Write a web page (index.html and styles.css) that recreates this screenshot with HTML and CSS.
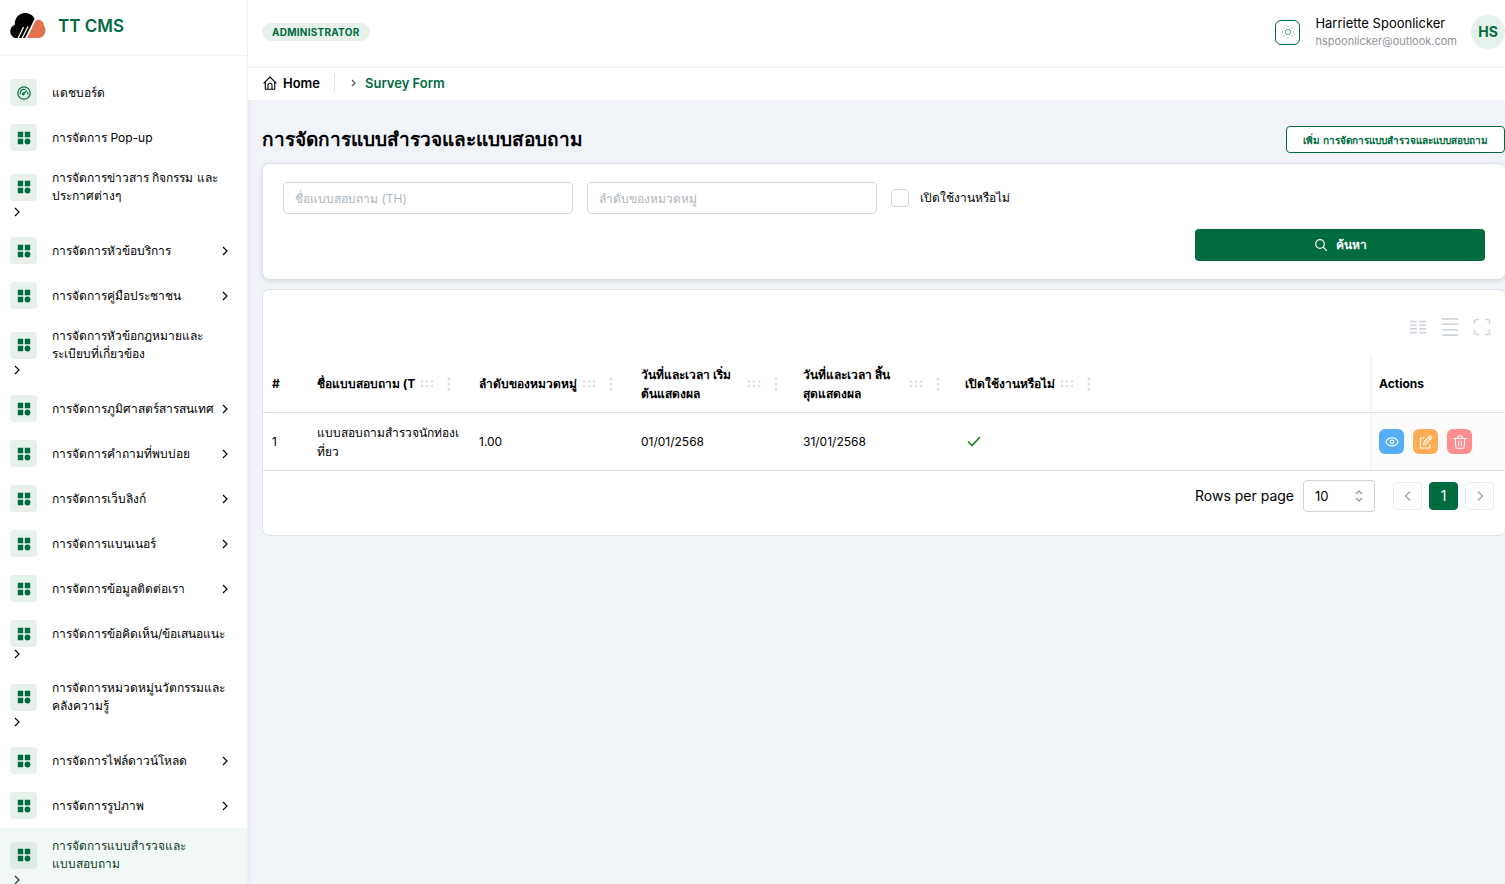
FILE: index.html
```html
<!DOCTYPE html>
<html lang="th">
<head>
<meta charset="utf-8">
<meta name="viewport" content="width=device-width, initial-scale=1">
<title>TT CMS</title>
<link rel="stylesheet" href="styles.css">
</head>
<body>
<svg class="defs" aria-hidden="true">
  <symbol id="grid" viewBox="0 0 14 14"><path fill="currentColor" d="M.8.8h5.4v5.4H.8zM7.8.8h5.4v5.4H7.8zM.8 7.8h5.4v5.4H.8z"/><circle cx="10.5" cy="10.5" r="2.9" fill="currentColor"/></symbol>
  <symbol id="chev" viewBox="0 0 14 14"><path fill="none" stroke="currentColor" stroke-width="1.2" d="M5 3l4 4-4 4"/></symbol>
  <symbol id="grip" viewBox="0 0 14 14"><g fill="currentColor"><circle cx="2" cy="4.500" r="1.300"/><circle cx="7" cy="4.500" r="1.300"/><circle cx="12" cy="4.500" r="1.300"/><circle cx="2" cy="9" r="1.300"/><circle cx="7" cy="9" r="1.300"/><circle cx="12" cy="9" r="1.300"/></g></symbol>
  <symbol id="dots" viewBox="0 0 16 16"><g fill="currentColor"><circle cx="8" cy="3" r="1.500"/><circle cx="8" cy="8" r="1.500"/><circle cx="8" cy="13" r="1.500"/></g></symbol>
</svg>
<div class="app">
  <aside class="sidebar">
    <div class="brand">
      <svg class="logo" viewBox="0 0 36 26"><path fill="#000" d="M5 25C1.800 24 0 21 .3 17.600c.2-2.900 2-5 4.500-5.900C4.500 5 9 0 15 0c4.600 0 8.300 2.400 9.800 6.300L15.500 25z"/><path fill="#e2714f" d="M17 25L25.500 7.800C27 6.800 28.500 6.500 30 7c2.400.8 4 3.200 4 6 1.400 1.400 1.800 3.300 1.400 5.500-.6 3.800-3.500 6.500-7.400 6.500z"/><path fill="none" stroke="#fff" stroke-width="1.300" d="M8 25.500l5.500-11.500M12 25.500l6-12M15.500 25.500L25.300 6"/></svg>
      <span class="brand-name">TT CMS</span>
    </div>
    <nav class="menu">
      <a class="item" href="#"><span class="tile"><svg viewBox="0 0 14 14" fill="none" stroke="currentColor" stroke-width="1.200"><circle cx="7" cy="7" r="6.200"/><path d="M3.400 8.500A3.700 3.700 0 0 1 8.400 3.700M10.600 6a4 4 0 0 1 0 2.500M6.500 8L9.800 4.500"/><circle cx="6.300" cy="8" r=".8"/></svg></span><span class="label">แดชบอร์ด</span></a>
      <a class="item" href="#"><span class="tile"><svg><use href="#grid"/></svg></span><span class="label">การจัดการ Pop-up</span></a>
      <a class="item stacked" href="#"><span class="tile"><svg><use href="#grid"/></svg></span><span class="label">การจัดการข่าวสาร กิจกรรม และ<br>ประกาศต่างๆ</span><svg class="chev"><use href="#chev"/></svg></a>
      <a class="item" href="#"><span class="tile"><svg><use href="#grid"/></svg></span><span class="label">การจัดการหัวข้อบริการ</span><svg class="chev"><use href="#chev"/></svg></a>
      <a class="item" href="#"><span class="tile"><svg><use href="#grid"/></svg></span><span class="label">การจัดการคู่มือประชาชน</span><svg class="chev"><use href="#chev"/></svg></a>
      <a class="item stacked" href="#"><span class="tile"><svg><use href="#grid"/></svg></span><span class="label">การจัดการหัวข้อกฎหมายและ<br>ระเบียบที่เกี่ยวข้อง</span><svg class="chev"><use href="#chev"/></svg></a>
      <a class="item" href="#"><span class="tile"><svg><use href="#grid"/></svg></span><span class="label">การจัดการภูมิศาสตร์สารสนเทศ</span><svg class="chev"><use href="#chev"/></svg></a>
      <a class="item" href="#"><span class="tile"><svg><use href="#grid"/></svg></span><span class="label">การจัดการคำถามที่พบบ่อย</span><svg class="chev"><use href="#chev"/></svg></a>
      <a class="item" href="#"><span class="tile"><svg><use href="#grid"/></svg></span><span class="label">การจัดการเว็บลิงก์</span><svg class="chev"><use href="#chev"/></svg></a>
      <a class="item" href="#"><span class="tile"><svg><use href="#grid"/></svg></span><span class="label">การจัดการแบนเนอร์</span><svg class="chev"><use href="#chev"/></svg></a>
      <a class="item" href="#"><span class="tile"><svg><use href="#grid"/></svg></span><span class="label">การจัดการข้อมูลติดต่อเรา</span><svg class="chev"><use href="#chev"/></svg></a>
      <a class="item stacked" href="#"><span class="tile"><svg><use href="#grid"/></svg></span><span class="label">การจัดการข้อคิดเห็น/ข้อเสนอแนะ</span><svg class="chev"><use href="#chev"/></svg></a>
      <a class="item stacked" href="#"><span class="tile"><svg><use href="#grid"/></svg></span><span class="label">การจัดการหมวดหมู่นวัตกรรมและ<br>คลังความรู้</span><svg class="chev"><use href="#chev"/></svg></a>
      <a class="item" href="#"><span class="tile"><svg><use href="#grid"/></svg></span><span class="label">การจัดการไฟล์ดาวน์โหลด</span><svg class="chev"><use href="#chev"/></svg></a>
      <a class="item" href="#"><span class="tile"><svg><use href="#grid"/></svg></span><span class="label">การจัดการรูปภาพ</span><svg class="chev"><use href="#chev"/></svg></a>
      <a class="item stacked active" href="#"><span class="tile"><svg><use href="#grid"/></svg></span><span class="label">การจัดการแบบสำรวจและ<br>แบบสอบถาม</span><svg class="chev"><use href="#chev"/></svg></a>
    </nav>
  </aside>

  <div class="main">
    <header class="topbar">
      <span class="role">ADMINISTRATOR</span>
      <div class="account">
        <button class="theme" type="button" aria-label="Theme"><svg viewBox="0 0 14 14" fill="none" stroke="currentColor"><circle cx="7" cy="7" r="2.600"/><path stroke-linecap="round" d="M7 1.400v.3M7 12.300v.3M1.400 7h.3M12.300 7h.3M3 3l.2.2M10.800 10.800l.2.2M3 11l.2-.2M10.800 3.200l.2-.2"/></svg></button>
        <div class="who"><span class="who-name">Harriette Spoonlicker</span><span class="who-mail">hspoonlicker@outlook.com</span></div>
        <span class="avatar">HS</span>
      </div>
    </header>
    <nav class="crumbs" aria-label="Breadcrumb">
      <a class="home" href="#"><svg viewBox="0 0 14 14" fill="none" stroke="currentColor" stroke-width="1.100" stroke-linejoin="round"><path d="M.6 7.300L7 1l6.400 6.300M2.300 6v7.300h9.400V6M5 13.300V9.200a2 2 0 0 1 4 0v4.100"/></svg>Home</a>
      <a class="here" href="#"><svg viewBox="0 0 14 14" fill="none" stroke="#555" stroke-width="1.200"><path d="M5 4l3 3-3 3"/></svg>Survey Form</a>
    </nav>

    <main class="content">
      <div class="heading">
        <h1>การจัดการแบบสำรวจและแบบสอบถาม</h1>
        <button class="add" type="button">เพิ่ม การจัดการแบบสำรวจและแบบสอบถาม</button>
      </div>
      <form class="card filters">
        <input class="field" type="text" aria-label="ชื่อแบบสอบถาม (TH)" placeholder="ชื่อแบบสอบถาม (TH)">
        <input class="field" type="text" aria-label="ลำดับของหมวดหมู่" placeholder="ลำดับของหมวดหมู่">
        <label class="check"><input type="checkbox">เปิดใช้งานหรือไม่</label>
        <button class="search" type="button"><svg viewBox="0 0 14 14" fill="none" stroke="currentColor" stroke-width="1.200"><circle cx="6" cy="6" r="4.300"/><path d="M9.200 9.200l3.600 3.600"/></svg>ค้นหา</button>
      </form>
      <section class="card listing">
        <div class="tools">
          <button type="button" aria-label="Columns"><svg viewBox="0 0 18 18" stroke="currentColor" stroke-width="1.600" stroke-linecap="round"><path d="M1.500 3.500h5.700M1.500 7.200h5.700M1.500 10.900h5.700M1.500 14.600h5.700M10.800 3.500h5.700M10.800 7.200h5.700M10.800 10.900h5.700M10.800 14.600h5.700"/></svg></button>
          <button type="button" aria-label="Density"><svg viewBox="0 0 18 18" stroke="currentColor" stroke-width="1.600" stroke-linecap="round"><path d="M1.500.9h15M1.500 6.300h15M1.500 11.700h15M1.500 17.100h15"/></svg></button>
          <button type="button" aria-label="Full screen"><svg viewBox="0 0 18 18" fill="none" stroke="currentColor" stroke-width="1.600" stroke-linecap="round"><path d="M1.500 5.500v-2a2 2 0 0 1 2-2h2M12.500 1.500h2a2 2 0 0 1 2 2v2M16.500 12.500v2a2 2 0 0 1-2 2h-2M5.500 16.500h-2a2 2 0 0 1-2-2v-2"/></svg></button>
        </div>
        <table>
          <colgroup><col class="c-num"><col class="c-mid"><col class="c-mid"><col class="c-mid"><col class="c-mid"><col><col class="c-act"></colgroup>
          <thead><tr>
            <th>#</th>
            <th><div class="th"><span class="one">ชื่อแบบสอบถาม (T</span><svg class="grip"><use href="#grip"/></svg><svg class="dots"><use href="#dots"/></svg></div></th>
            <th><div class="th"><span class="one">ลำดับของหมวดหมู่</span><svg class="grip"><use href="#grip"/></svg><svg class="dots"><use href="#dots"/></svg></div></th>
            <th><div class="th"><span class="two">วันที่และเวลา เริ่ม<br>ต้นแสดงผล</span><svg class="grip"><use href="#grip"/></svg><svg class="dots"><use href="#dots"/></svg></div></th>
            <th><div class="th"><span class="two">วันที่และเวลา สิ้น<br>สุดแสดงผล</span><svg class="grip"><use href="#grip"/></svg><svg class="dots"><use href="#dots"/></svg></div></th>
            <th><div class="th"><span class="one">เปิดใช้งานหรือไม่</span><svg class="grip"><use href="#grip"/></svg><svg class="dots"><use href="#dots"/></svg></div></th>
            <th class="pin">Actions</th>
          </tr></thead>
          <tbody><tr>
            <td>1</td>
            <td>แบบสอบถามสำรวจนักท่องเ<br>ที่ยว</td>
            <td>1.00</td>
            <td>01/01/2568</td>
            <td>31/01/2568</td>
            <td><svg class="tick" viewBox="0 0 18 18" fill="none" stroke="#128a12" stroke-width="1.600"><path d="M3 8.500l4 4L15 4"/></svg></td>
            <td class="pin"><div class="acts">
              <button class="view" type="button" aria-label="View"><svg viewBox="0 0 14 14" fill="none" stroke="currentColor" stroke-width="1.100"><path d="M.8 6.800C2 4.300 4.300 2.700 7 2.700s5 1.600 6.200 4.100C12 9.300 9.700 10.900 7 10.900S2 9.300.8 6.800z"/><circle cx="7" cy="6.800" r="1.700"/></svg></button>
              <button class="edit" type="button" aria-label="Edit"><svg viewBox="0 0 14 14" fill="none" stroke="currentColor" stroke-width="1.100" stroke-linejoin="round" stroke-linecap="round"><path d="M5 3H1.500v10h9.300V9.500M4.500 9.700l.7-2.900L11 1.200c.7-.6 2.200.7 1.500 1.600L7 8.700zM9.700 2.500l1.800 1.600"/></svg></button>
              <button class="del" type="button" aria-label="Delete"><svg viewBox="0 0 14 14" fill="none" stroke="currentColor" stroke-width="1.100" stroke-linejoin="round" stroke-linecap="round"><path d="M1 3.500h12M4.500 3.300C4.500 1.500 5.300.8 7 .8s2.500.7 2.500 2.500M2.200 3.800l.6 8c.1 1 .5 1.500 1.500 1.500h5.400c1 0 1.400-.5 1.500-1.500l.6-8M5.600 6.300v4.200M8.400 6.300v4.200"/></svg></button>
            </div></td>
          </tr></tbody>
        </table>
        <div class="pager">
          <label for="rows">Rows per page</label>
          <div class="rows"><select id="rows"><option>10</option><option>20</option></select><svg viewBox="0 0 14 14" fill="none" stroke="#868e96" stroke-width="1.100"><path d="M4 5l3-3 3 3M4 9l3 3 3-3"/></svg></div>
          <div class="pages">
            <button type="button" aria-label="Previous"><svg viewBox="0 0 14 14" fill="none" stroke="currentColor" stroke-width="1.400"><path d="M9 2.500L4.700 7 9 11.500"/></svg></button>
            <button class="current" type="button">1</button>
            <button type="button" aria-label="Next"><svg viewBox="0 0 14 14" fill="none" stroke="currentColor" stroke-width="1.400"><path d="M5 2.500L9.300 7 5 11.500"/></svg></button>
          </div>
        </div>
      </section>
    </main>
  </div>
</div>
</body>
</html>
```
FILE: styles.css
```css
* { box-sizing: border-box; }
body { margin: 0; font: 12px/18px Inter, "Noto Sans", sans-serif; color: #000; background: #f0f3f8; }
button, input, select { font: inherit; margin: 0; }
button { padding: 0; border: 0; background: none; cursor: pointer; display: flex; align-items: center; justify-content: center; }
a { color: inherit; text-decoration: none; }
svg { width: 14px; height: 14px; flex: none; display: block; }
.defs { position: absolute; width: 0; height: 0; }

.app { display: flex; height: 100vh; overflow: hidden; }
.sidebar { width: 248px; flex: none; background: #fff; border-right: 1px solid #f0f1f3; box-shadow: 0 0 4px rgba(40, 60, 100, .12); overflow: hidden; }
.brand { height: 56px; padding: 0 10px 4px; display: flex; align-items: center; gap: 12px; border-bottom: 1px solid #eff1f3; }
.logo { width: 36px; height: 26px; }
.brand-name { font-size: 17px; font-weight: 600; line-height: 24px; color: #006b3f; }
.menu { padding-top: 14px; }
.item { display: flex; align-items: center; padding: 9px 15px 9px 10px; }
.tile { width: 27px; height: 27px; margin-right: 15px; flex: none; display: grid; place-items: center; border-radius: 4px; background: #e7f1ec; color: #006b3f; }
.label { flex: 1; white-space: nowrap; }
.stacked { flex-wrap: wrap; }
.stacked .label { flex: 0 0 180px; }
.active { background: #f2f8f6; color: #0c3b29; }
.active .tile { background: #dfece6; }

.main { flex: 1; min-width: 0; }
.topbar { height: 68px; padding: 0 0 2px 14px; display: flex; align-items: center; justify-content: space-between; background: #fff; border-bottom: 2px solid #f3f4fa; }
.role { padding: 0 10px; border-radius: 9px; background: #e7f1ec; color: #006b3f; font-size: 10px; font-weight: 700; letter-spacing: 0.25px; }
.account { display: flex; align-items: center; }
.theme { width: 25px; height: 25px; margin-right: 15px; border: 1px solid #006b3f; border-radius: 6px; color: #5c9c7f; }
.who { display: flex; flex-direction: column; margin-right: 14px; }
.who-name { font-size: 13px; }
.who-mail { font-size: 11px; color: #909499; }
.avatar { width: 34px; height: 34px; border-radius: 50%; display: grid; place-items: center; background: #e7f1ec; color: #006b3f; font-size: 14px; font-weight: 700; }
.crumbs { height: 32px; padding: 0 15px 2px; display: flex; align-items: center; background: #fff; font-size: 13px; font-weight: 600; }
.home { display: flex; align-items: center; gap: 6px; padding-right: 14px; border-right: 1px solid #dcdfe4; }
.here { display: flex; align-items: center; gap: 4px; padding-left: 12px; color: #006b3f; }

.content { padding: 26px 0 0 14px; }
.heading { display: flex; justify-content: space-between; align-items: center; margin-bottom: 10px; }
h1 { margin: 0; font-size: 19px; line-height: 27px; font-weight: 600; }
.add { height: 27px; padding: 0 16px; border: 1px solid #006b3f; border-radius: 4px; background: #fff; color: #006b3f; font-size: 10px; font-weight: 600; white-space: nowrap; }
.card { background: #fff; border: 1px solid #dee2e8; border-right-width: 0; border-radius: 7px; }
.filters { display: grid; grid-template-columns: repeat(4, 1fr); gap: 15px 14px; padding: 18px 20px 17px; margin-bottom: 10px; border-bottom-color: #fff; box-shadow: 0 2px 5px rgba(0, 0, 0, .12); }
.field { width: 100%; height: 32px; padding: 0 11px; border: 1px solid #ced4da; border-radius: 4px; background: #fff; }
.field::placeholder { color: #adb5bd; opacity: 1; }
.check { display: flex; align-items: center; gap: 11px; }
.check input { appearance: none; width: 18px; height: 18px; border: 1px solid #ced4da; border-radius: 4px; background: #fff; }
.search { grid-area: 2 / 4; height: 32px; gap: 8px; border-radius: 4px; background: #006b3f; color: #fff; font-weight: 600; }

.tools { height: 65px; padding: 9px 14px 0 0; display: flex; align-items: center; justify-content: flex-end; gap: 14px; color: #ced4da; }
.tools button { color: inherit; }
.tools svg { width: 18px; height: 18px; }
table { width: 100%; table-layout: fixed; border-collapse: separate; border-spacing: 0; line-height: 19px; }
.c-num { width: 45px; }
.c-mid { width: 162px; }
.c-act { width: 135px; }
th, td { height: 58px; padding: 0 9px; text-align: left; vertical-align: middle; border-bottom: 1px solid #dee2e6; white-space: nowrap; }
th { font-weight: 700; }
.th { display: flex; align-items: center; }
.one, .two { max-width: 101px; }
.two { width: 101px; }
.grip { margin: 0 7px 0 5px; color: #dcdfe3; }
.dots { width: 16px; height: 16px; color: #dcdfe3; }
.pin { box-shadow: inset 3px 0 2px -1px #f3f4f5; }
td.pin { background: #fbfbfb; }
.tick { width: 18px; height: 18px; }
.acts { display: flex; gap: 9px; }
.acts button { width: 25px; height: 25px; border-radius: 6px; color: #fff; }
.view { background: #54adf7; }
.edit { background: #ffad55; }
.del { background: #ff8d8d; }
.pager { display: flex; align-items: center; justify-content: flex-end; padding: 9px 11px 23px; font-size: 14px; }
.rows { display: grid; align-items: center; margin: 0 18px 0 9px; }
.rows select, .rows svg { grid-area: 1 / 1; }
.rows svg { justify-self: end; margin-right: 9px; pointer-events: none; }
.rows select { appearance: none; width: 72px; height: 32px; padding: 0 11px; border: 1px solid #ced4da; border-radius: 4px; background: #fff; color: #000; font-size: 13px; }
.pages { display: flex; gap: 7px; }
.pages button { width: 29px; height: 28px; border: 1px solid #e9ebee; border-radius: 4px; background: #fff; color: #a0a3a8; }
.pages .current { background: #006b3f; border-color: #006b3f; color: #fff; }
```
